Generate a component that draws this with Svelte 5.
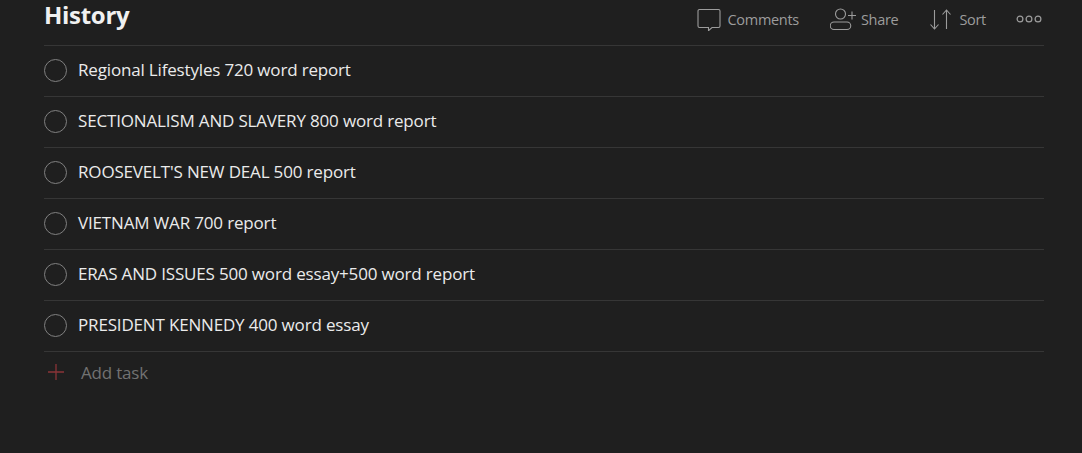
<script>
  const tasks = [
    'Regional Lifestyles 720 word report',
    'SECTIONALISM AND SLAVERY 800 word report',
    "ROOSEVELT'S NEW DEAL 500 report",
    'VIETNAM WAR 700 report',
    'ERAS AND ISSUES 500 word essay+500 word report',
    'PRESIDENT KENNEDY 400 word essay'
  ];
</script>

<div class="page">
  <header class="head">
    <h1>History</h1>
    <div class="actions">
      <button class="action comments">
        <svg width="24" height="24" viewBox="0 0 24 24" fill="none" stroke="currentColor" stroke-width="1.1">
          <path d="M2.500 2.500h19a1.500 1.500 0 0 1 1.500 1.500v15a1.500 1.500 0 0 1-1.500 1.500h-6.500l-3.500 3.200v-3.200h-9a1.500 1.500 0 0 1-1.500-1.500v-15a1.500 1.500 0 0 1 1.500-1.500z"/>
        </svg>
        <span>Comments</span>
      </button>
      <button class="action share">
        <svg width="26" height="24" viewBox="0 0 26 24" fill="none" stroke="currentColor" stroke-width="1.1">
          <circle cx="10.500" cy="7" r="5"/>
          <path d="M4 22.500h13a3 3 0 0 0 0-7.500h-13a3.700 3.700 0 0 0 0 7.500z"/>
          <path d="M18 8.500h8M22 4.500v8"/>
        </svg>
        <span>Share</span>
      </button>
      <button class="action sort">
        <svg width="22" height="24" viewBox="0 0 22 24" fill="none" stroke="currentColor" stroke-width="1.1">
          <path d="M4.500 3v19M0.500 17.500l4 4.500 4-4.500"/>
          <path d="M16.500 22v-19M12.500 7.500l4-4.500 4 4.500"/>
        </svg>
        <span>Sort</span>
      </button>
      <button class="action more" aria-label="More">
        <svg width="26" height="8" viewBox="0 0 26 8" fill="none" stroke="currentColor" stroke-width="1.2">
          <circle cx="4" cy="4" r="2.900"/>
          <circle cx="13" cy="4" r="2.900"/>
          <circle cx="22" cy="4" r="2.900"/>
        </svg>
      </button>
    </div>
  </header>

  <ul class="list">
    {#each tasks as task}
      <li class="task">
        <span class="check"></span>
        <span class="title">{task}</span>
      </li>
    {/each}
  </ul>

  <button class="add">
    <svg width="16" height="16" viewBox="0 0 16 16" stroke="#8a3438" stroke-width="1.300">
      <path d="M8 0v16M0 8h16"/>
    </svg>
    <span>Add task</span>
  </button>
</div>

<style>
  :global(body) {
    margin: 0;
    background: #1f1f1f;
  }

  .page {
    width: 1000px;
    height: 453px;
    margin-left: 44px;
    font-family: 'Open Sans', 'Liberation Sans', sans-serif;
    overflow: hidden;
  }

  .head {
    display: flex;
    justify-content: space-between;
    align-items: flex-start;
    height: 46px;
    box-sizing: border-box;
    border-bottom: 1px solid #363636;
  }

  h1 {
    margin: 0;
    font-size: 24px;
    font-weight: 700;
    color: #f0f0f0;
    line-height: 29px;
    letter-spacing: -0.3px;
  }

  .actions {
    display: flex;
    align-items: center;
    height: 38px;
    padding-right: 2px;
  }

  button {
    background: none;
    border: 0;
    padding: 0;
    font: inherit;
  }

  .action {
    display: flex;
    align-items: center;
    color: #9c9c9c;
    font-size: 14.500px;
    letter-spacing: -0.3px;
  }

  .comments { gap: 7px; margin-right: 31px; }
  .share { gap: 5px; margin-right: 32px; }
  .sort { gap: 7px; margin-right: 30px; }

  .list {
    list-style: none;
    margin: 0;
    padding: 0;
  }

  .task {
    display: flex;
    align-items: center;
    gap: 11px;
    height: 51px;
    box-sizing: border-box;
    padding-bottom: 2px;
    border-bottom: 1px solid #363636;
  }

  .check {
    width: 23px;
    height: 23px;
    box-sizing: border-box;
    border: 1px solid #808080;
    border-radius: 50%;
  }

  .title {
    color: #ebebeb;
    font-size: 17px;
    letter-spacing: -0.17px;
    margin-bottom: 1px;
  }

  .add {
    display: flex;
    align-items: center;
    gap: 17px;
    height: 40px;
    margin-left: 4px;
    color: #727272;
    font-size: 17px;
    letter-spacing: -0.2px;
  }
</style>
